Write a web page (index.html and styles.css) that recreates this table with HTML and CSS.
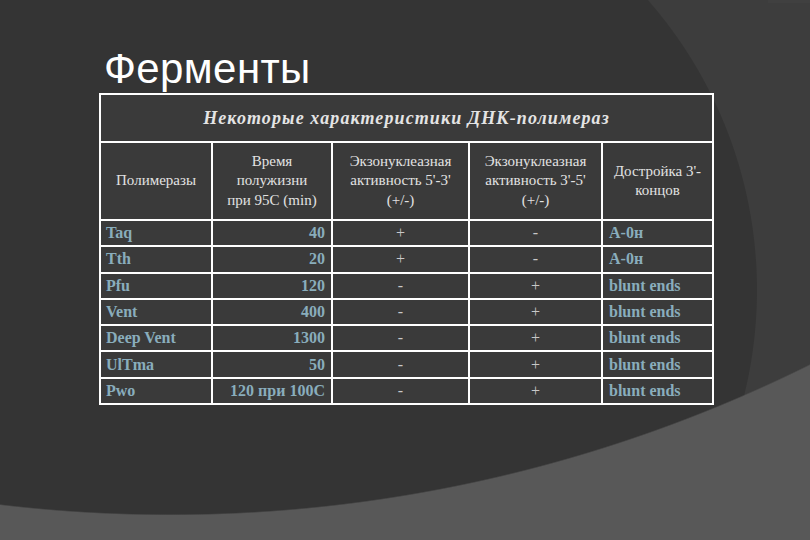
FILE: index.html
```html
<!DOCTYPE html>
<html lang="ru">
<head>
<meta charset="utf-8">
<title>Ферменты</title>
<link rel="stylesheet" href="styles.css">
</head>
<body>
<div class="slide">
  <h1 class="title">Ферменты</h1>
  <table class="poly">
    <colgroup>
      <col class="c1"><col class="c2"><col class="c3"><col class="c4"><col class="c5">
    </colgroup>
    <tr class="cap-row">
      <td colspan="5" class="cap">Некоторые характеристики ДНК-полимераз</td>
    </tr>
    <tr class="head-row">
      <td>Полимеразы</td>
      <td>Время<br>полужизни<br>при 95С (min)</td>
      <td>Экзонуклеазная<br>активность 5'-3'<br>(+/-)</td>
      <td>Экзонуклеазная<br>активность 3'-5'<br>(+/-)</td>
      <td>Достройка 3'-<br>концов</td>
    </tr>
    <tr><td class="name">Taq</td><td class="num">40</td><td class="sign">+</td><td class="sign">-</td><td class="end">A-0н</td></tr>
    <tr><td class="name">Tth</td><td class="num">20</td><td class="sign">+</td><td class="sign">-</td><td class="end">A-0н</td></tr>
    <tr><td class="name">Pfu</td><td class="num">120</td><td class="sign">-</td><td class="sign">+</td><td class="end">blunt ends</td></tr>
    <tr><td class="name">Vent</td><td class="num">400</td><td class="sign">-</td><td class="sign">+</td><td class="end">blunt ends</td></tr>
    <tr><td class="name">Deep Vent</td><td class="num">1300</td><td class="sign">-</td><td class="sign">+</td><td class="end">blunt ends</td></tr>
    <tr><td class="name">UlTma</td><td class="num">50</td><td class="sign">-</td><td class="sign">+</td><td class="end">blunt ends</td></tr>
    <tr><td class="name">Pwo</td><td class="num">120 при 100С</td><td class="sign">-</td><td class="sign">+</td><td class="end">blunt ends</td></tr>
  </table>
</div>
</body>
</html>
```

FILE: styles.css
```css
html, body {
  margin: 0;
  padding: 0;
}
body {
  width: 810px;
  height: 540px;
  overflow: hidden;
  background: #343434;
}
.slide {
  width: 810px;
  height: 540px;
  box-sizing: border-box;
  padding: 48px 0 0 99px;
  background:
    linear-gradient(#404040, #404040) 768px 0 / 42px 3px no-repeat,
    radial-gradient(circle 1440px at 170px -925px, transparent 1439px, #585858 1440.5px),
    radial-gradient(circle 440px at 317px 290px, #343434 439.5px, #3d3d3d 440.5px);
}
.title {
  margin: 0 0 3px 5px;
  font-family: "Liberation Sans", Arial, sans-serif;
  font-weight: normal;
  font-size: 42px;
  line-height: 42px;
  color: #ffffff;
  letter-spacing: 0.4px;
}
.poly {
  border-collapse: collapse;
  width: 613px;
  table-layout: fixed;
  font-family: "Liberation Serif", "DejaVu Serif", "Times New Roman", serif;
  border: 2px solid #ffffff;
}
.c1 { width: 112px; }
.c2 { width: 120px; }
.c3 { width: 137px; }
.c4 { width: 133px; }
.c5 { width: 111px; }
.poly td {
  border: 2px solid #ffffff;
  background: #3a3a3a;
  padding: 0;
}
.cap-row td {
  height: 46px;
  text-align: center;
  font-style: italic;
  font-weight: bold;
  font-size: 18px;
  letter-spacing: 1.1px;
  color: #e4e4e4;
}
.head-row td {
  height: 76px;
  text-align: center;
  vertical-align: middle;
  font-size: 15px;
  line-height: 19.5px;
  color: #e2e2e2;
}
.poly tr:nth-child(n+3) td {
  height: 24.3px;
  font-size: 16px;
  line-height: 20px;
  vertical-align: middle;
}
.name {
  padding-left: 5px !important;
  font-weight: bold;
  color: #89adbc;
}
.num {
  text-align: right;
  padding-right: 6px !important;
  font-weight: bold;
  color: #89adbc;
}
.sign {
  text-align: center;
  color: #c8c8c8;
}
.end {
  padding-left: 6px !important;
  font-weight: bold;
  color: #89adbc;
}
```
